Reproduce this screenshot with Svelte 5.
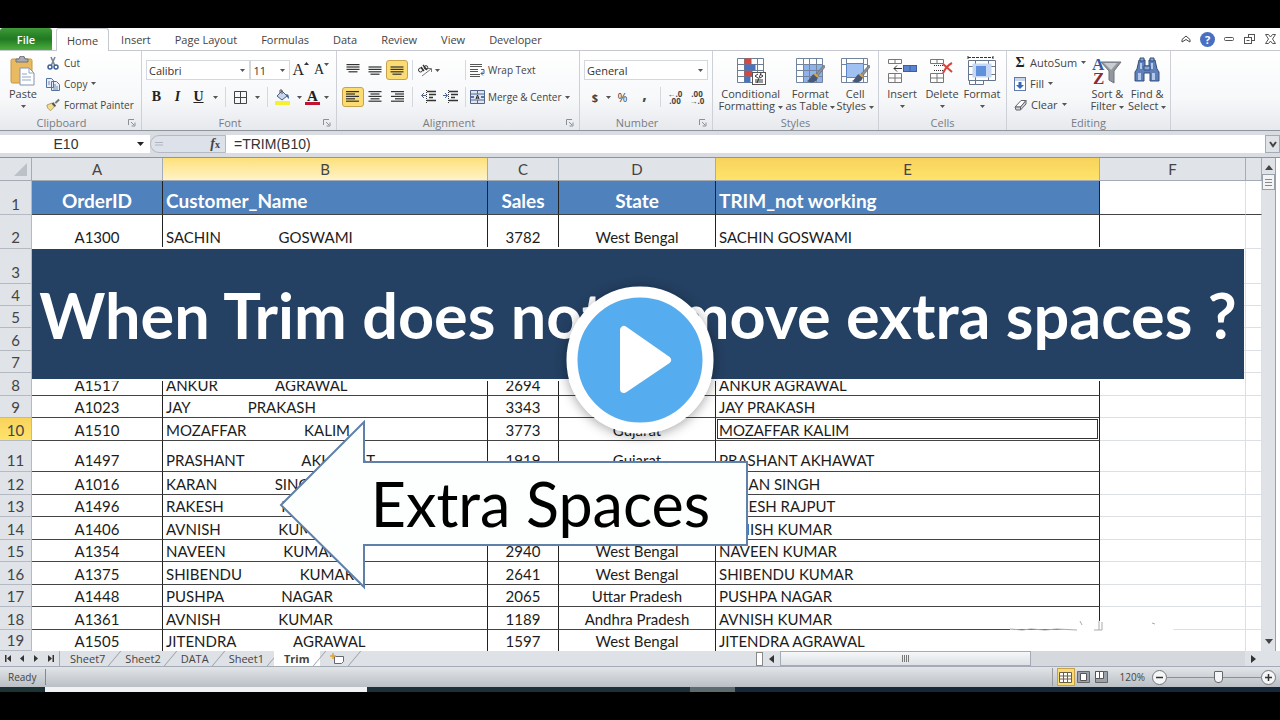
<script>
	const menuTabs = ['Insert', 'Page Layout', 'Formulas', 'Data', 'Review', 'View', 'Developer'];
	const sheetNames = ['Sheet7', 'Sheet2', 'DATA', 'Sheet1', 'Trim'];
	const columns = ['A', 'B', 'C', 'D', 'E', 'F', ''];
	const gap = ' '.repeat(15);

	const rows = [
		{ n: 2, h: 34, id: 'A1300', name: ['SACHIN', 'GOSWAMI'], sales: 3782, state: 'West Bengal' },
		{ n: 3, h: 35 },
		{ n: 4, h: 22 },
		{ n: 5, h: 22 },
		{ n: 6, h: 23 },
		{ n: 7, h: 22 },
		{ n: 8, h: 23, id: 'A1517', name: ['ANKUR', 'AGRAWAL'], sales: 2694 },
		{ n: 9, h: 22, id: 'A1023', name: ['JAY', 'PRAKASH'], sales: 3343 },
		{ n: 10, h: 23, id: 'A1510', name: ['MOZAFFAR', 'KALIM'], sales: 3773, state: 'Gujarat' },
		{ n: 11, h: 31, id: 'A1497', name: ['PRASHANT', 'AKHAWAT'], sales: 1919, state: 'Gujarat' },
		{ n: 12, h: 23, id: 'A1016', name: ['KARAN', 'SINGH'] },
		{ n: 13, h: 22, id: 'A1496', name: ['RAKESH', 'RAJPUT'] },
		{ n: 14, h: 23, id: 'A1406', name: ['AVNISH', 'KUMAR'] },
		{ n: 15, h: 22, id: 'A1354', name: ['NAVEEN', 'KUMAR'], sales: 2940, state: 'West Bengal' },
		{ n: 16, h: 23, id: 'A1375', name: ['SHIBENDU', 'KUMAR'], sales: 2641, state: 'West Bengal' },
		{ n: 17, h: 22, id: 'A1448', name: ['PUSHPA', 'NAGAR'], sales: 2065, state: 'Uttar Pradesh' },
		{ n: 18, h: 23, id: 'A1361', name: ['AVNISH', 'KUMAR'], sales: 1189, state: 'Andhra Pradesh' },
		{ n: 19, h: 21, id: 'A1505', name: ['JITENDRA', 'AGRAWAL'], sales: 1597, state: 'West Bengal' }
	];

	let activeSheet = $state('Trim');
	let formula = $state('=TRIM(B10)');
	let cellRef = $state('E10');
	let zoom = $state(120);
</script>

{#snippet caret()}
	<svg class="caret" width="5" height="3" viewBox="0 0 5 3"><path d="M0 0h5L2.500 3z" fill="#555" /></svg>
{/snippet}

{#snippet lines(widths, side)}
	<svg width="14" height="14" viewBox="0 0 14 14">
		{#each widths as w, i}
			<rect x={side === 'left' ? 0 : (14 - w) / (side === 'right' ? 1 : 2)} y={1 + i * 2.4} width={w} height="1.200" fill="#333" />
		{/each}
	</svg>
{/snippet}

{#snippet launcher(label)}
	<button class="launcher" aria-label={label}>
		<svg width="8" height="8" viewBox="0 0 8 8" fill="none" stroke="#8b9097"><path d="M.5 6V.5H6M3 3l3 3M7 3.500V7H3.500" /></svg>
	</button>
{/snippet}

{#snippet brush()}
	<path d="M29 9l-9 10 2 2 8-10z" fill="#8d9199" stroke="#5b5f66" stroke-width=".6" />
	<path d="M20 18c-4 0-4 5-8 7 5 3 10 1 11-4z" fill="#4a5878" />
	<path d="M19.500 18l3.500 3" stroke="#d9a441" stroke-width="2" />
{/snippet}

<main>
	<nav class="tabs">
		<button class="file">File</button>
		<button class="tab home">Home</button>
		{#each menuTabs as tab}
			<button class="tab">{tab}</button>
		{/each}
		<div class="window-tools">
			<button aria-label="Minimize ribbon">
				<svg width="10" height="8" viewBox="0 0 10 8" fill="none" stroke="#444"><path d="M1 4.500L5 1l4 3.500V7L5 4.500 1 7z" /></svg>
			</button>
			<button class="help" aria-label="Help">?</button>
			<button aria-label="Minimize">
				<svg width="11" height="6" viewBox="0 0 11 6" fill="none" stroke="#555"><rect x=".5" y="1.500" width="9" height="3" rx="1" /></svg>
			</button>
			<button aria-label="Restore">
				<svg width="12" height="11" viewBox="0 0 12 11" fill="#fff" stroke="#555"><rect x="4.500" y=".5" width="6" height="6" /><rect x=".5" y="3.500" width="7" height="6" /><path d="M2.500 6.500h3" /></svg>
			</button>
			<button aria-label="Close">
				<svg width="11" height="10" viewBox="0 0 11 10" fill="#fff" stroke="#555"><path d="M.5.500h3l2 2.500 2-2.500h3L7.500 5l3 4.500h-3L5.500 7l-2 2.500h-3L3.500 5z" /></svg>
			</button>
		</div>
	</nav>

	<div class="ribbon">
		<section class="group clipboard">
			<div class="body">
				<button class="big">
					<svg width="28" height="30" viewBox="0 0 28 30">
						<rect x="2" y="3" width="21" height="24" rx="1.500" fill="#e8bb62" stroke="#c49543" />
						<path d="M7 6V3h3a3 3 0 016 0h3v3z" fill="#a9adb5" stroke="#6d727b" />
						<path d="M11 12h9l5 5v12H11z" fill="#fff" stroke="#8394ad" />
						<path d="M20 12v5h5M13 18h5M13 21h9M13 24h9" fill="none" stroke="#8fa6c7" />
					</svg>
					<span>Paste</span>
					{@render caret()}
				</button>
				<div class="stack">
					<button>
						<svg width="14" height="14" viewBox="0 0 14 14" fill="none" stroke="#3f5f96"><path d="M5 1l4 9M9 1L5 10" stroke="#7d8694" stroke-width="1.600" /><circle cx="4" cy="11" r="2" stroke-width="1.500" /><circle cx="10" cy="11" r="2" stroke-width="1.500" /></svg>
						Cut
					</button>
					<button>
						<svg width="14" height="14" viewBox="0 0 14 14" fill="#e8effa" stroke="#54719f"><path d="M.5 1.500h5l2 2v7h-7zM5.500 4.500h5l3 3v6h-8z" /><path d="M2 5h2M2 7h2M7 8h3M7 10h5M7 12h5" stroke-width=".8" /></svg>
						Copy {@render caret()}
					</button>
					<button>
						<svg width="14" height="14" viewBox="0 0 15 14"><path d="M1 7l5-2 3 4-4 4C3 12 1 10 1 7z" fill="#f1dc91" stroke="#9d8845" stroke-width=".8" /><path d="M6 5l2-1 3 4-2 1z" fill="#555" /><path d="M10 5l4-4" stroke="#777" stroke-width="2.200" /></svg>
						Format Painter
					</button>
				</div>
			</div>
			<footer class="with-launcher">Clipboard {@render launcher('Clipboard options')}</footer>
		</section>

		<section class="group font">
			<div class="body lined">
				<div class="line">
					<label class="combo family"><select aria-label="Font"><option>Calibri</option></select>{@render caret()}</label>
					<label class="combo size"><select aria-label="Font size"><option>11</option></select>{@render caret()}</label>
					<button class="glyph grow">A<svg width="5" height="3" viewBox="0 0 5 3"><path d="M0 3h5L2.500 0z" fill="#333" /></svg></button>
					<button class="glyph shrink">A{@render caret()}</button>
				</div>
				<div class="line">
					<button class="glyph"><b>B</b></button>
					<button class="glyph"><b><i>I</i></b></button>
					<button class="glyph"><b><u>U</u></b></button>
					<button class="drop" aria-label="Underline style">{@render caret()}</button>
					<i class="rule"></i>
					<button class="glyph" aria-label="Borders">
						<svg width="13" height="13" viewBox="0 0 13 13" fill="none" stroke="#444"><path d="M.5.500h12v12H.5zM6.500.500v12M.5 6.500h12" /></svg>
					</button>
					<button class="drop" aria-label="Border style">{@render caret()}</button>
					<i class="rule"></i>
					<button class="glyph" aria-label="Fill color">
						<svg width="16" height="16" viewBox="0 0 16 16"><path d="M2 7l5-5 5 5-5 4z" fill="#c9d5ea" stroke="#4c5f86" /><path d="M5 4V1h2v4" fill="none" stroke="#555" /><path d="M11 5c3 0 3 3 3 5-2-1-2-3-3-5z" fill="#3d66a8" /><rect y="12" width="15" height="4" fill="#f6f034" /></svg>
					</button>
					<button class="drop" aria-label="Fill choices">{@render caret()}</button>
					<button class="glyph font-color">A</button>
					<button class="drop" aria-label="Font color choices">{@render caret()}</button>
				</div>
			</div>
			<footer class="with-launcher">Font {@render launcher('Font options')}</footer>
		</section>

		<section class="group alignment">
			<div class="body lined">
				<div class="line">
					<button class="cell" aria-label="Top align">{@render lines([13, 13, 13, 9], 'center')}</button>
					<button class="cell" aria-label="Middle align">{@render lines([0, 13, 13, 13, 9], 'center')}</button>
					<button class="cell on" aria-label="Bottom align">{@render lines([0, 13, 13, 13, 9], 'center')}</button>
					<i class="rule"></i>
					<button class="cell wide" aria-label="Orientation">
						<svg width="16" height="14" viewBox="0 0 16 14" fill="none" stroke="#333"><circle cx="3.500" cy="7" r="2" /><path d="M4 4l3 4M6 2l4 5" stroke-width="1.300" /><circle cx="9" cy="4.500" r="1.800" /><path d="M5 13l9-7M14.500 9V5.500H11" stroke="#777" /></svg>
						{@render caret()}
					</button>
					<i class="rule"></i>
					<button class="text">
						<svg width="15" height="14" viewBox="0 0 15 14" fill="none" stroke="#555"><path d="M0 1.500h12M0 3.500h12M0 6.500h8M0 8.500h8M0 11.500h10M0 13.500h10" /><path d="M11 6.500h3v4h-3l2-2M11 10.500l2 2" stroke="#3d66a8" /></svg>
						Wrap Text
					</button>
				</div>
				<div class="line">
					<button class="cell on" aria-label="Align left">{@render lines([13, 9, 13, 9, 13], 'left')}</button>
					<button class="cell" aria-label="Center">{@render lines([13, 9, 13, 9, 13], 'center')}</button>
					<button class="cell" aria-label="Align right">{@render lines([13, 9, 13, 9, 13], 'right')}</button>
					<i class="rule"></i>
					{#each ['Decrease indent', 'Increase indent'] as label, i}
						<button class="cell" aria-label={label}>
							<svg width="15" height="14" viewBox="0 0 15 14" fill="none" stroke="#333"><path d="M6 1.500h9M8 4.500h7M8 7.500h4M6 10.500h9" stroke-width="1.500" /><path d="M5.500 0v14" stroke-dasharray="1 1" /><path d={i ? 'M0 5.500h4M2 3l2.500 2.500L2 8' : 'M5 5.500H1M3 3L.5 5.500 3 8'} stroke="#3d66a8" /></svg>
						</button>
					{/each}
					<i class="rule"></i>
					<button class="text">
						<svg width="15" height="14" viewBox="0 0 15 14"><path d="M.5.500h14v13H.5zM.5 4h14M.5 10h14M7.500.500V4M7.500 10v3.500" fill="#dfe7f4" stroke="#53658a" /><path d="M1 7h3M14 7h-3" stroke="#2d4f8d" stroke-width="1.500" /><path d="M6 9l1.500-4L9 9M6.500 8h2" fill="none" stroke="#222" /></svg>
						Merge &amp; Center {@render caret()}
					</button>
				</div>
			</div>
			<footer class="with-launcher">Alignment {@render launcher('Alignment options')}</footer>
		</section>

		<section class="group number">
			<div class="body lined">
				<div class="line">
					<label class="combo format"><select aria-label="Number format"><option>General</option></select>{@render caret()}</label>
				</div>
				<div class="line">
					<button class="cell"><b>$</b></button>
					<button class="drop" aria-label="Currency choices">{@render caret()}</button>
					<button class="cell percent">%</button>
					<button class="cell comma">,</button>
					<i class="rule"></i>
					<button class="cell decimals"><span>←.0</span><span>.00</span></button>
					<button class="cell decimals"><span>.00</span><span>→.0</span></button>
				</div>
			</div>
			<footer class="with-launcher">Number {@render launcher('Number options')}</footer>
		</section>

		<section class="group styles">
			<div class="body">
				<button class="big wide">
					<svg width="30" height="30" viewBox="0 0 30 30"><path d="M1.500 2.500h26v24h-26zM1.500 8.500h26M1.500 14.500h26M1.500 20.500h26M8.500 2.500v24M21.500 2.500v24" fill="#fff" stroke="#6d7f95" /><path d="M8.500 2.500h7v6h-7zM8.500 14.500h8v6h-8z" fill="#d4493f" /><path d="M8.500 8.500h11v6h-11zM8.500 20.500h6v6h-6z" fill="#4a74bd" /><rect x="16.500" y="16.500" width="13" height="12" fill="#fff" stroke="#555" /><path d="M22 18l-3 2 3 2M24 18l3 2-3 2M19 24h8M19 26h8M25 17l-4 10" stroke="#333" fill="none" /></svg>
					<span>Conditional<br />Formatting {@render caret()}</span>
				</button>
				<button class="big mid">
					<svg width="30" height="30" viewBox="0 0 30 30"><path d="M1.500 2.500h26v24h-26z" fill="#fff" /><path d="M8.500 8.500h19v18h-19z" fill="#8fb2ea" /><path d="M1.500 2.500h26v24h-26zM1.500 8.500h26M1.500 14.500h26M1.500 20.500h26M8.500 2.500v24M14.500 2.500v24M21.500 2.500v24" fill="none" stroke="#71859f" />{@render brush()}</svg>
					<span>Format<br />as Table {@render caret()}</span>
				</button>
				<button class="big">
					<svg width="30" height="30" viewBox="0 0 30 30"><path d="M1.500 2.500h26v24h-26zM1.500 8.500h26M1.500 20.500h26M6.500 2.500v24M23.500 2.500v24" fill="#fff" stroke="#71859f" /><path d="M6.500 7.500h17v14h-17z" fill="#9fc2f3" stroke="#5f87c5" />{@render brush()}</svg>
					<span>Cell<br />Styles {@render caret()}</span>
				</button>
			</div>
			<footer>Styles</footer>
		</section>

		<section class="group cells">
			<div class="body">
				<button class="big">
					<svg width="30" height="30" viewBox="0 0 30 30"><path d="M1.500 3.500h13v4h-13zM8 3.500v4M1.500 17.500h13v9h-13zM1.500 22h13M8 17.500v9" fill="#fff" stroke="#777" /><rect x="16.500" y="9.500" width="13" height="6" fill="#5b83d0" stroke="#3b5fa6" /><path d="M23 9.500v6" stroke="#3b5fa6" /><path d="M7 12.500h8M10 9.500l-3 3 3 3" fill="none" stroke="#333" /></svg>
					<span>Insert</span>{@render caret()}
				</button>
				<button class="big">
					<svg width="30" height="30" viewBox="0 0 30 30"><path d="M3.500 3.500h13v4h-13zM10 3.500v4M3.500 17.500h13v9h-13zM3.500 22h13M10 17.500v9" fill="#fff" stroke="#777" /><path d="M7 9.500h10M7 14.500h10" stroke="#333" stroke-dasharray="1 1" /><path d="M16 8l9 8M25 7c-4 2-7 6-9 10" stroke="#d9453c" stroke-width="2" fill="none" /></svg>
					<span>Delete</span>{@render caret()}
				</button>
				<button class="big">
					<svg width="30" height="30" viewBox="0 0 30 30"><path d="M1.500 4.500h27v20h-27zM1.500 10.500h27M1.500 18.500h27M8.500 4.500v24h-6v-4M21.500 4.500v20M8.500 28.500h8v-4" fill="#fff" stroke="#66758b" /><path d="M5.500 7.500h19v14h-19z" fill="#c5d7f2" /><rect x="9" y="10" width="10" height="10" fill="#5f90dc" /><path d="M1 1.500h25M1 0v3M26 0v3" stroke="#333" stroke-dasharray="3 1" /></svg>
					<span>Format</span>{@render caret()}
				</button>
			</div>
			<footer>Cells</footer>
		</section>

		<section class="group editing">
			<div class="body">
				<div class="stack">
					<button><strong class="sigma">Σ</strong> AutoSum {@render caret()}</button>
					<button>
						<svg width="12" height="14" viewBox="0 0 12 14"><rect x=".5" y=".5" width="11" height="13" fill="#fff" stroke="#5e7cab" /><path d="M1 1h10v3H1z" fill="#c6d5ec" /><path d="M4.500 5h3v3H10l-4 4-4-4h2.500z" fill="#3568bb" /></svg>
						Fill {@render caret()}
					</button>
					<button>
						<svg width="13" height="12" viewBox="0 0 13 12"><path d="M1 8l6-6.500h5L6.500 8z" fill="#fff" stroke="#666" /><path d="M1 8h5.500v3H2zM6.500 8L12 1.500V5l-5.500 6z" fill="#cfd3d9" stroke="#666" /></svg>
						Clear {@render caret()}
					</button>
				</div>
				<button class="big">
					<svg width="30" height="30" viewBox="0 0 30 30"><path d="M9 6h20l-7 9v12l-5-3v-9z" fill="#93979e" stroke="#6f737a" /><path d="M12 7h13l-6 7z" fill="#c9ccd1" /><text x="0" y="14" class="letter blue">A</text><text x="1" y="28" class="letter red">Z</text></svg>
					<span>Sort &amp;<br />Filter {@render caret()}</span>
				</button>
				<button class="big">
					<svg width="28" height="30" viewBox="0 0 28 30"><path d="M6 4h6v6h4V4h6l2 9 2 3v9h-9v-8h-6v8H2v-9l2-3z" fill="#5e7fb8" stroke="#34507f" /><path d="M7 2h4v3H7zM17 2h4v3h-4zM11 10h6v4h-6z" fill="#8aa5d3" stroke="#34507f" /><path d="M5 17h3v7H5zM19 17h3v7h-3zM7 7h2v6H7zM18 7h2v6h-2z" fill="#b4c8e9" /></svg>
					<span>Find &amp;<br />Select {@render caret()}</span>
				</button>
			</div>
			<footer>Editing</footer>
		</section>
	</div>

	<div class="formula-bar">
		<div class="name-box">
			<input aria-label="Name box" bind:value={cellRef} />
			<button aria-label="Cell names"><svg width="7" height="4" viewBox="0 0 7 4"><path d="M0 0h7L3.500 4z" fill="#222" /></svg></button>
		</div>
		<div class="fx">
			<svg width="8" height="4" viewBox="0 0 8 4"><path d="M0 .5h8M0 3h8" stroke="#b0b5bd" /></svg>
			<button class="fx-button"><i>f</i><small>x</small></button>
		</div>
		<input class="formula" aria-label="Formula" bind:value={formula} />
		<button class="expand" aria-label="Expand formula bar">
			<svg width="8" height="7" viewBox="0 0 8 7" fill="none" stroke="#444" stroke-width="2"><path d="M1 1l3 4 3-4" /></svg>
		</button>
	</div>

	<div class="workbook">
		<div class="sheet">
			<table>
				<colgroup>
					<col class="w-num" /><col class="w-a" /><col class="w-b" /><col class="w-c" /><col class="w-d" /><col class="w-e" /><col class="w-f" /><col />
				</colgroup>
				<thead>
					<tr>
						<th class="corner"><svg width="13" height="13" viewBox="0 0 13 13"><path d="M13 0v13H0z" fill="#bcc1c7" /></svg></th>
						{#each columns as column}
							<th class:soft={column === 'B'} class:active={column === 'E'}>{column}</th>
						{/each}
					</tr>
				</thead>
				<tbody>
					<tr class="titles" style="height: 34px">
						<th>1</th>
						<td class="center">OrderID</td>
						<td>Customer_Name</td>
						<td class="center">Sales</td>
						<td class="center">State</td>
						<td>TRIM_not working</td>
						<td class="empty"></td>
						<td class="empty"></td>
					</tr>
					{#each rows as row}
						<tr class:tall={row.h > 30} style="height: {row.h}px">
							<th class:active={row.n === 10}>{row.n}</th>
							<td class="center">{row.id ?? ''}</td>
							<td>{row.name ? row.name.join(gap) : ''}</td>
							<td class="center">{row.sales ?? ''}</td>
							<td class="center">{row.state ?? ''}</td>
							<td class:selected={row.n === 10}>{row.name ? row.name.join(' ') : ''}</td>
							<td class="empty"></td>
							<td class="empty"></td>
						</tr>
					{/each}
				</tbody>
			</table>

			<h1 class="banner">When Trim does not remove extra spaces ?</h1>

			<div class="callout">
				<svg width="470" height="170" viewBox="0 0 470 170"><path d="M2 85L85 2v40h383v83H85v42z" fill="#fdfefe" stroke="#5f80a8" stroke-width="2" /></svg>
				<p>Extra Spaces</p>
			</div>

			<svg class="smudge" width="260" height="36" viewBox="0 0 260 36">
				<path d="M8 14q30 4 72-2l20-7 70 4 3 12 62 6-30 9H4z" fill="#fff" />
				<path d="M8 14l12 1 9-1 14 1 12-1 20 1M78 6l2 4M92 15h8v-8M97 6v9M150 8l3 1" fill="none" stroke="#aaa" />
			</svg>
		</div>

		<div class="scroll-y">
			<svg width="8" height="5" viewBox="0 0 8 5"><path d="M0 5h8L4 0z" fill="#444" /></svg>
			<div class="thumb"><i></i><i></i><i></i></div>
			<svg class="down" width="8" height="5" viewBox="0 0 8 5"><path d="M0 0h8L4 5z" fill="#444" /></svg>
		</div>
	</div>

	<div class="sheet-bar">
		<div class="arrows">
			<button aria-label="First sheet"><svg width="7" height="7" viewBox="0 0 7 7"><path d="M0 0h1.500v7H0zM6 0v7L2 3.500z" fill="#333" /></svg></button>
			<button aria-label="Previous sheet"><svg width="7" height="7" viewBox="0 0 7 7"><path d="M5 0v7L1 3.500z" fill="#333" /></svg></button>
			<button aria-label="Next sheet"><svg width="7" height="7" viewBox="0 0 7 7"><path d="M1 0v7l4-3.500z" fill="#333" /></svg></button>
			<button aria-label="Last sheet"><svg width="7" height="7" viewBox="0 0 7 7"><path d="M5.500 0H7v7H5.500zM1 0v7l4-3.500z" fill="#333" /></svg></button>
		</div>
		{#each sheetNames as name}
			<button class="sheet-tab" class:current={name === activeSheet} onclick={() => (activeSheet = name)}>{name}</button>
		{/each}
		<button class="sheet-tab" aria-label="Insert sheet">
			<svg width="15" height="12" viewBox="0 0 15 12"><path d="M4.500 3.500h9v5l-2 2h-7z" fill="#fff" stroke="#667" /><path d="M3 0v6M0 3h6" stroke="#e0a52e" stroke-width="1.500" /></svg>
		</button>
		<div class="scroll-x">
			<i class="splitter"></i>
			<svg width="5" height="8" viewBox="0 0 5 8"><path d="M5 0v8L0 4z" fill="#333" /></svg>
			<div class="track"><div class="thumb"><i></i><i></i><i></i><i></i></div></div>
			<svg width="5" height="8" viewBox="0 0 5 8"><path d="M0 0v8l5-4z" fill="#333" /></svg>
		</div>
	</div>

	<div class="status">
		<span class="ready">Ready</span>
		<div class="views">
			<button class="on" aria-label="Normal view"><svg width="13" height="11" viewBox="0 0 13 11"><path d="M.5.500h12v10H.5zM.5 4h12M.5 7h12M4.500.500v10M8.500.500v10" fill="#fff" stroke="#6b6044" /></svg></button>
			<button aria-label="Page layout"><svg width="13" height="12" viewBox="0 0 13 12"><path d="M.5.500h12v11H.5z" fill="#9ba1a9" stroke="#666" /><path d="M3.500 2.500h6v7h-6z" fill="#fff" stroke="#555" /></svg></button>
			<button aria-label="Page break preview"><svg width="13" height="12" viewBox="0 0 13 12"><path d="M.5.500h12v11H.5z" fill="#9ba1a9" stroke="#666" /><path d="M.5.500h4v7h-4zM4.500.500h4v7h-4z" fill="#fff" stroke="#555" /></svg></button>
		</div>
		<span>{zoom}%</span>
		<button class="round" aria-label="Zoom out" onclick={() => (zoom -= 10)}><svg width="7" height="7" viewBox="0 0 7 7"><path d="M0 3.500h7" stroke="#333" stroke-width="1.500" /></svg></button>
		<input type="range" min="10" max="210" aria-label="Zoom" bind:value={zoom} />
		<button class="round" aria-label="Zoom in" onclick={() => (zoom += 10)}><svg width="7" height="7" viewBox="0 0 7 7"><path d="M0 3.500h7M3.500 0v7" stroke="#333" stroke-width="1.500" /></svg></button>
	</div>
	<div class="taskbar"></div>

	<button class="play" aria-label="Play video">
		<svg width="148" height="148" viewBox="0 0 148 148">
			<circle cx="74" cy="74" r="68" fill="#55acee" stroke="#fff" stroke-width="11" />
			<path d="M58 44v59L101 74z" fill="#fff" stroke="#fff" stroke-width="8" stroke-linejoin="round" />
		</svg>
	</button>
</main>

<style>
	:global(body) {
		margin: 0;
		background: #000;
	}
	main {
		position: relative;
		box-sizing: border-box;
		min-height: 100vh;
		padding: 28px 0;
		background: #000;
		font-family: 'Open Sans', 'Noto Sans', sans-serif;
		font-size: 11px;
		color: #444;
		overflow: hidden;
	}
	button {
		margin: 0;
		padding: 0;
		border: none;
		background: none;
		font: inherit;
		color: inherit;
	}
	svg {
		display: block;
		flex: none;
	}
	.tabs {
		display: flex;
		height: 23px;
		background: #fff;
		border-bottom: 1px solid #c5c9cf;
		box-sizing: border-box;
	}
	.file {
		width: 52px;
		margin-right: 4px;
		border-radius: 3px 3px 0 0;
		background: linear-gradient(#3f9a38, #1f7a22 50%, #4fae3e);
		color: #fff;
		font-weight: 600;
	}
	.tab {
		padding: 0 12px;
	}
	.home {
		padding: 0 10px;
		height: 23px;
		border: 1px solid #c5c9cf;
		border-bottom: none;
		border-radius: 3px 3px 0 0;
		background: #fff;
	}
	.window-tools {
		display: flex;
		align-items: center;
		gap: 9px;
		margin-left: auto;
		padding-right: 4px;
	}
	.help {
		width: 15px;
		height: 15px;
		border-radius: 50%;
		background: #4a6fc0;
		color: #fff;
		font-weight: 700;
		line-height: 15px;
	}
	.ribbon {
		display: flex;
		box-sizing: border-box;
		height: 80px;
		background: linear-gradient(#fff, #f7f8fa 60%, #e6e9ed);
		border-bottom: 1px solid #8f959d;
	}
	.group {
		display: flex;
		flex-direction: column;
		box-sizing: border-box;
		border-right: 1px solid #cdd1d7;
	}
	.group footer {
		position: relative;
		text-align: center;
		line-height: 15px;
		color: #777c84;
	}
	.group .with-launcher {
		padding-right: 18px;
	}
	.launcher {
		position: absolute;
		right: 5px;
		top: 4px;
	}
	.clipboard { width: 142px; }
	.font { width: 195px; }
	.alignment { width: 243px; }
	.number { width: 133px; }
	.styles { width: 166px; }
	.cells { width: 128px; }
	.editing { width: 164px; }
	.body {
		display: flex;
		flex: 1;
		padding: 1px 3px 0;
	}
	.lined {
		flex-direction: column;
		gap: 7px;
		padding: 9px 4px 0;
	}
	.line {
		display: flex;
		align-items: center;
		height: 20px;
	}
	.stack {
		display: flex;
		flex-direction: column;
	}
	.stack button {
		display: flex;
		align-items: center;
		gap: 4px;
		height: 21px;
		white-space: nowrap;
	}
	.clipboard .stack {
		padding-left: 3px;
		font-size: 10px;
	}
	.big {
		display: flex;
		flex-direction: column;
		align-items: center;
		width: 40px;
		padding-top: 4px;
		line-height: 12px;
		white-space: nowrap;
	}
	.big > span {
		padding-top: 2px;
	}
	.big > .caret {
		margin-top: 5px;
	}
	.big span .caret {
		display: inline-block;
		vertical-align: middle;
	}
	.big.wide { width: 70px; }
	.big.mid { width: 50px; }
	.combo {
		position: relative;
		box-sizing: border-box;
		height: 20px;
		border: 1px solid #d4d7dc;
		background: #fff;
	}
	.combo select {
		width: 100%;
		height: 18px;
		padding: 0 2px;
		border: none;
		background: none;
		appearance: none;
		font: inherit;
		color: #333;
	}
	.combo .caret {
		position: absolute;
		right: 4px;
		top: 8px;
	}
	.family { width: 105px; }
	.size { width: 40px; }
	.format { width: 124px; }
	.glyph {
		display: flex;
		justify-content: center;
		width: 21px;
		font-family: 'Liberation Serif', serif;
		font-size: 14px;
		color: #222;
	}
	.grow {
		font-size: 16px;
	}
	.grow svg, .shrink svg {
		margin-top: 1px;
	}
	.font-color {
		width: 15px;
		font-size: 15px;
		font-weight: 700;
		line-height: 12px;
		border-bottom: 3px solid #c3122f;
	}
	.drop {
		display: flex;
		justify-content: center;
		width: 12px;
	}
	.rule {
		width: 1px;
		height: 20px;
		margin: 0 4px;
		background: #d5d8dd;
	}
	.cell {
		display: flex;
		flex: none;
		align-items: center;
		justify-content: center;
		box-sizing: border-box;
		width: 22px;
		height: 20px;
	}
	.cell.wide {
		width: 44px;
		justify-content: flex-start;
		gap: 2px;
	}
	.cell.on {
		border: 1px solid #c8a24a;
		border-radius: 3px;
		background: #fbdc72;
	}
	.percent {
		font-size: 12px;
	}
	.comma {
		padding-bottom: 6px;
		font-weight: 700;
		font-size: 16px;
		line-height: 10px;
	}
	.decimals {
		flex-direction: column;
		font-size: 8px;
		line-height: 7px;
		font-weight: 700;
	}
	.alignment .lined {
		padding-left: 5px;
	}
	.text {
		display: flex;
		align-items: center;
		gap: 3px;
		font-size: 10px;
		white-space: nowrap;
	}
	.editing .stack {
		width: 74px;
		padding-left: 4px;
	}
	.sigma {
		width: 12px;
		font-family: 'Liberation Serif', serif;
		font-size: 14px;
		color: #222;
	}
	.letter {
		font-family: 'Liberation Serif', serif;
		font-size: 17px;
		font-weight: 700;
	}
	.blue { fill: #35599b; }
	.red { fill: #8c2c2c; }
	.formula-bar {
		display: flex;
		height: 18px;
		padding: 4px 0;
		background: #d9dce1;
		border-bottom: 1px solid #8f959d;
		font-family: 'Liberation Sans', sans-serif;
		font-size: 14px;
	}
	.formula-bar input {
		border: none;
		padding: 0 8px;
		background: #fff;
		font: inherit;
		color: #333;
		min-width: 0;
	}
	.name-box {
		display: flex;
		align-items: center;
		width: 150px;
		background: #fff;
	}
	.name-box input {
		width: 116px;
		height: 18px;
		text-align: center;
	}
	.name-box button {
		margin-left: 5px;
	}
	.fx {
		display: flex;
		align-items: center;
		justify-content: space-between;
		box-sizing: border-box;
		width: 76px;
		padding: 0 5px 0 4px;
		border: 1px solid #b4b9c2;
		border-radius: 9px 0 0 9px;
		background: #dde2ea;
	}
	.fx-button {
		font: 700 14px 'Liberation Serif', serif;
		line-height: 16px;
	}
	.fx-button small {
		font-size: 10px;
	}
	.formula {
		flex: 1;
	}
	.expand {
		display: flex;
		align-items: center;
		justify-content: center;
		width: 15px;
		border: 1px solid #a5abb4;
		background: #dfe2e7;
	}
	.workbook {
		display: flex;
		background: #fff;
	}
	.sheet {
		position: relative;
		flex: 1;
		min-width: 0;
		overflow: hidden;
	}
	table {
		width: 100%;
		table-layout: fixed;
		border-spacing: 0;
		font-family: Lato, 'Open Sans', sans-serif;
		font-size: 15px;
		line-height: 20px;
		color: #1c1c1c;
	}
	.w-num { width: 32px; }
	.w-a { width: 131px; }
	.w-b { width: 325px; }
	.w-c { width: 71px; }
	.w-d { width: 157px; }
	.w-e { width: 384px; }
	.w-f { width: 146px; }
	th, td {
		box-sizing: border-box;
		padding: 0 3px;
		vertical-align: bottom;
		text-align: left;
		white-space: pre;
		overflow: hidden;
	}
	td {
		border-right: 1px solid #222;
		border-bottom: 1px solid #444;
	}
	th {
		padding: 0;
		text-align: center;
		font-weight: 400;
		color: #444;
		background: #e0e3e8;
		border-right: 1px solid #b5bac2;
		border-bottom: 1px solid #b5bac2;
	}
	thead th {
		height: 23px;
		border-color: #a5abb4;
		vertical-align: middle;
	}
	.tall th, .tall td {
		padding-bottom: 1px;
	}
	.corner svg {
		margin: 0 4px 0 auto;
	}
	th.soft {
		background: linear-gradient(#fde07a, #fff3c8);
	}
	th.active {
		background: linear-gradient(#f8d35c, #ffe36b);
	}
	.center {
		text-align: center;
	}
	.titles td {
		background: #4f81bd;
		color: #fff;
		font-size: 19px;
		font-weight: 700;
		line-height: 26px;
	}
	td.empty {
		background: #fff;
		border-color: #dcdfe3;
	}
	.titles td.empty {
		border-bottom-color: #444;
	}
	tr:last-child td {
		border-bottom: none;
	}
	.selected {
		box-shadow: inset 0 0 0 1px #fff, inset 0 0 0 2px #333;
	}
	.banner {
		position: absolute;
		left: 32px;
		right: 18px;
		top: 89px;
		height: 130px;
		margin: 0;
		border: 2px solid #fff;
		border-width: 2px 0;
		background: #244062;
		color: #fff;
		font-family: Lato, 'Open Sans', sans-serif;
		font-size: 63px;
		font-weight: 700;
		line-height: 132px;
		text-align: center;
		white-space: nowrap;
	}
	.callout {
		position: absolute;
		left: 279px;
		top: 262px;
	}
	.callout p {
		position: absolute;
		left: 85px;
		right: 32px;
		top: 42px;
		margin: 0;
		color: #000;
		font-family: Lato, 'Open Sans', sans-serif;
		font-size: 61px;
		line-height: 84px;
		text-align: center;
		white-space: nowrap;
	}
	.smudge {
		position: absolute;
		right: 0;
		bottom: 0;
	}
	.scroll-y {
		display: flex;
		flex-direction: column;
		align-items: center;
		width: 13px;
		margin-right: 4px;
		padding: 7px 0;
		background: #dfe3e7;
		border-right: 1px solid #9aa0a8;
	}
	.scroll-y .thumb {
		display: flex;
		flex-direction: column;
		justify-content: center;
		gap: 2px;
		width: 11px;
		height: 14px;
		margin-top: 4px;
		border: 1px solid #9aa0a8;
		background: #f2f4f6;
	}
	.scroll-y i {
		height: 1px;
		margin: 0 2px;
		background: #888;
	}
	.down {
		margin-top: auto;
	}
	.sheet-bar {
		display: flex;
		height: 15px;
		background: #dee1e5;
		border-bottom: 1px solid #a5abb4;
	}
	.arrows {
		display: flex;
		align-items: center;
		gap: 7px;
		box-sizing: border-box;
		width: 60px;
		padding-left: 5px;
		border-right: 1px solid #a5abb4;
	}
	.sheet-tab {
		position: relative;
		padding: 0 10px;
		line-height: 15px;
	}
	.sheet-tab::after {
		content: '';
		position: absolute;
		right: 0;
		top: 0;
		width: 1px;
		height: 15px;
		background: #9aa0a8;
		transform: skewX(-40deg);
	}
	.sheet-tab.current {
		background: #fff;
		font-weight: 700;
	}
	.scroll-x {
		display: flex;
		align-items: center;
		gap: 6px;
		flex: 1;
		max-width: 500px;
		margin-left: auto;
		padding-right: 24px;
	}
	.splitter {
		width: 5px;
		height: 12px;
		border: 1px solid #888;
		background: #fff;
	}
	.track {
		flex: 1;
		height: 15px;
		background: #d5d9de;
	}
	.scroll-x .thumb {
		display: flex;
		align-items: center;
		justify-content: center;
		gap: 1px;
		box-sizing: border-box;
		width: 54%;
		height: 15px;
		border: 1px solid #a5abb4;
		background: linear-gradient(#f5f7f8, #dde1e5);
	}
	.scroll-x .thumb i {
		width: 1px;
		height: 7px;
		background: #777;
	}
	.status {
		display: flex;
		align-items: center;
		height: 20px;
		font-size: 10px;
		background: linear-gradient(#e2e5e8, #b9bfc5);
	}
	.ready {
		box-sizing: border-box;
		width: 46px;
		padding-left: 8px;
		border-right: 1px solid #888;
		line-height: 16px;
	}
	.views {
		display: flex;
		margin: 0 9px 0 auto;
		padding-left: 4px;
		border-left: 1px solid #999;
	}
	.views button {
		display: flex;
		align-items: center;
		justify-content: center;
		box-sizing: border-box;
		width: 18px;
		height: 18px;
	}
	.views .on {
		border: 1px solid #c8a24a;
		background: #fbdc72;
	}
	.round {
		display: flex;
		align-items: center;
		justify-content: center;
		box-sizing: border-box;
		width: 15px;
		height: 15px;
		margin-left: 7px;
		border: 1px solid #777;
		border-radius: 50%;
		background: #f5f6f7;
	}
	.round:last-child {
		margin: 0 4px 0 0;
	}
	input[type='range'] {
		width: 94px;
		height: 16px;
		margin: 0;
		appearance: none;
		background: linear-gradient(#8a9097, #8a9097) center / 100% 1px no-repeat;
	}
	input[type='range']::-webkit-slider-thumb {
		appearance: none;
		width: 9px;
		height: 12px;
		border: 1px solid #666;
		border-radius: 1px 1px 4px 4px;
		background: #f5f6f7;
	}
	.taskbar {
		height: 5px;
		background: linear-gradient(90deg, #1c3336 45px, #f0f2f3 45px, #f0f2f3 367px, #1b3038 367px, #1b3038 690px, #5d6a70 690px, #5d6a70 735px, #14283a 735px);
	}
	.play {
		position: absolute;
		left: 50%;
		top: 50%;
		transform: translate(-50%, -50%);
		border-radius: 50%;
		box-shadow: 0 2px 12px rgba(0, 0, 0, 0.35);
	}
</style>
